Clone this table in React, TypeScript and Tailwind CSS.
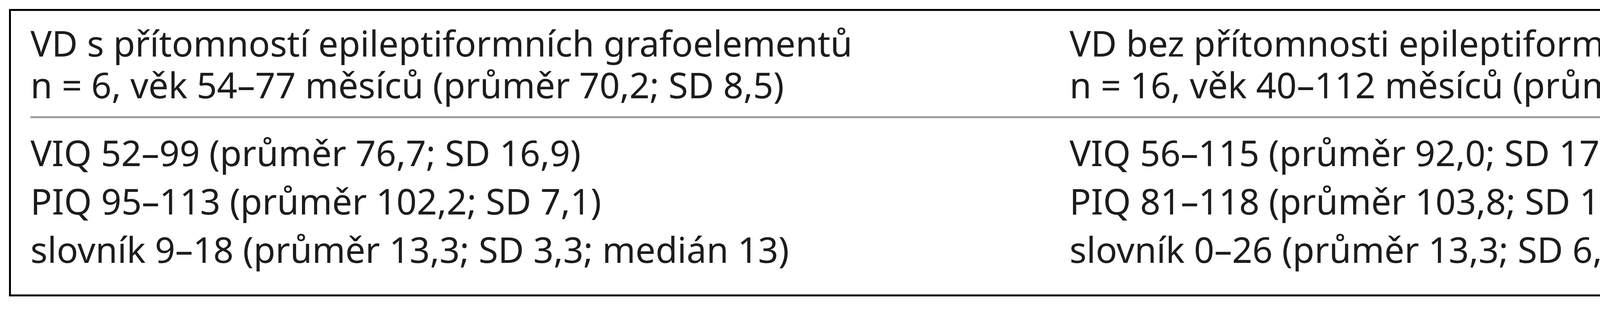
const LEFT = {
  title: "VD s přítomností epileptiformních grafoelementů",
  meta: "n = 6, věk 54–77 měsíců (průměr 70,2; SD 8,5)",
  rows: [
    "VIQ 52–99 (průměr 76,7; SD 16,9)",
    "PIQ 95–113 (průměr 102,2; SD 7,1)",
    "slovník 9–18 (průměr 13,3; SD 3,3; medián 13)",
  ],
};

const RIGHT = {
  title: "VD bez přítomnosti epileptiformních grafoelementů",
  meta: "n = 16, věk 40–112 měsíců (průměr 66,3; SD 18,1)",
  rows: [
    "VIQ 56–115 (průměr 92,0; SD 17,0)",
    "PIQ 81–118 (průměr 103,8; SD 10,9)",
    "slovník 0–26 (průměr 13,3; SD 6,9; medián 15)",
  ],
};

export default function App() {
  return (
    <div className="min-h-[800px] w-[5448px] bg-white pl-[23px] pt-[23px] font-['Noto_Sans',sans-serif] text-[91px] text-[#1c1c1c]">
      <div className="w-[5380px] border-[5px] border-black pl-[50px]">
        {/* header */}
        <div className="grid grid-cols-[2660px_1fr] border-b-[5px] border-[#9b9b9b] pb-[27px] pt-[29px] leading-[107px]">
          {[LEFT, RIGHT].map((g) => (
            <div key={g.title} className="whitespace-nowrap">
              <div>{g.title}</div>
              <div>{g.meta}</div>
            </div>
          ))}
        </div>

        {/* body */}
        <div className="grid grid-cols-[2660px_1fr] pb-[54px] pt-[26px] leading-[124px]">
          {[LEFT, RIGHT].map((g) => (
            <div key={g.title} className="whitespace-nowrap">
              {g.rows.map((r) => (
                <div key={r}>{r}</div>
              ))}
            </div>
          ))}
        </div>
      </div>
    </div>
  );
}
